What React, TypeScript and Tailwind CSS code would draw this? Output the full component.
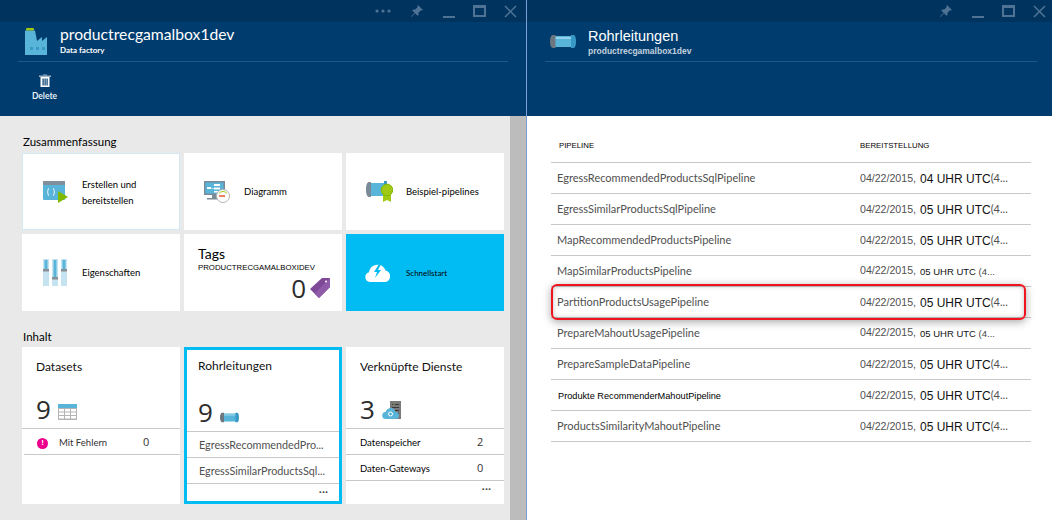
import type { ReactNode } from 'react';

const sans = 'font-["Lato","Liberation_Sans",sans-serif]';
const digit = 'font-["Open_Sans","Liberation_Sans",sans-serif]';
const arial = 'font-["Liberation_Sans",Arial,sans-serif]';

function WindowControls({ more }: { more?: boolean }) {
  return (
    <div className="flex h-[22px] items-center justify-end bg-[#00345f] pr-[9px]">
      {more && (
        <svg width="16" height="4" viewBox="0 0 16 4" className="mr-[19px]" fill="#4f7394">
          <circle cx="2" cy="2" r="1.6" />
          <circle cx="8" cy="2" r="1.6" />
          <circle cx="14" cy="2" r="1.6" />
        </svg>
      )}
      <svg width="14" height="14" viewBox="0 0 14 14" className="mr-[19px]" fill="#4f7394">
        <path d="M8 1l5 5-1.2.6-.8-.4-2.6 2.6.2 2-1 1L5 9.200 1.500 13 1 12.500 4.600 8.800 2.200 6.400l1-1 2 .2L7.800 3l-.4-.8z" />
      </svg>
      <div className="mr-[18px] mt-[11px] h-[2px] w-[12px] bg-[#4f7394]" />
      <div className="mr-[18px] h-[12px] w-[13px] border-2 border-t-[3px] border-[#4f7394]" />
      <svg width="13" height="13" viewBox="0 0 13 13" stroke="#4f7394" strokeWidth="1.500">
        <path d="M1 1l11 11M12 1L1 12" />
      </svg>
    </div>
  );
}

function FactoryIcon() {
  return (
    <svg width="24" height="28" viewBox="0 0 24 28">
      <path d="M1 2.500h10L13 13l5-4v4l5-4v18H1z" fill="#59b4d9" />
      <rect x="2" y="0" width="8" height="2.500" rx="1" fill="#a0c814" />
      <rect x="6" y="19" width="3" height="3" fill="#3999c6" />
      <rect x="12" y="19" width="3" height="3" fill="#3999c6" />
      <rect x="18" y="19" width="3" height="3" fill="#3999c6" />
    </svg>
  );
}

function TrashIcon() {
  return (
    <svg width="12" height="13" viewBox="0 0 12 13">
      <path d="M0 1.500h12v1.500H0z" fill="#9fb3c6" />
      <path d="M4 .5h4v1H4z" fill="#9fb3c6" />
      <path d="M1.500 3h9v10h-9z" fill="#fff" />
      <path d="M3.500 4.500h1.200v7H3.500zM5.500 4.500h1.200v7H5.500zM7.500 4.500h1.200v7H7.500z" fill="#003d6e" />
    </svg>
  );
}

function PipeIcon({ w, h }: { w: number; h: number }) {
  return (
    <svg width={w} height={h} viewBox="0 0 26 15">
      <rect x="2" y="2" width="22" height="11" fill="#59b4d9" />
      <rect x="4" y="3" width="18" height="2" fill="#8fd0ea" />
      <path d="M3 1h2.500v13H3c-1.500 0-3-2-3-6.500S1.500 1 3 1z" fill="#6b7680" />
      <path d="M21 1h2.500c1.500 0 2.500 2.500 2.500 6.500S25 14 23.500 14H21z" fill="#3999c6" />
    </svg>
  );
}

function DeployIcon() {
  return (
    <svg width="26" height="22" viewBox="0 0 26 22">
      <rect x="0" y="0" width="22" height="19" rx="1" fill="#59b4d9" />
      <rect x="0" y="0" width="22" height="4" fill="#7f8f9c" />
      <path d="M6 7.500c-1 0-1 .8-1 2s-.8 1.500-1 1.500c.2 0 1 .3 1 1.500s0 2 1 2M10 7.500c1 0 1 .8 1 2s.8 1.500 1 1.500c-.2 0-1 .3-1 1.500s0 2-1 2" fill="none" stroke="#fff" strokeWidth="1" />
      <path d="M15 10l10 6-10 6z" fill="#7fba00" />
    </svg>
  );
}

function DiagramIcon() {
  return (
    <svg width="26" height="22" viewBox="0 0 26 22">
      <rect x="0" y="0" width="21" height="14" fill="#7a8a96" />
      <rect x="1.500" y="1.500" width="18" height="11" fill="#59b4d9" />
      <path d="M3 6h4v2H3zM10 3h6v2h-6zM10 6.500h6v2h-6zM10 10h6v1.500h-6zM7 7h3v.5H7z" fill="#fff" />
      <rect x="8" y="14" width="5" height="3" fill="#7a8a96" />
      <rect x="3" y="17" width="15" height="1.500" fill="#7a8a96" />
      <circle cx="19" cy="15" r="6.500" fill="#fff" stroke="#b4b4b4" />
      <path d="M15 15h6" stroke="#e8562a" strokeWidth="1.500" />
      <path d="M15 12.500a5 5 0 0 1 8 0" fill="none" stroke="#a0c814" strokeWidth="1" />
    </svg>
  );
}

function SamplePipeIcon() {
  return (
    <svg width="27" height="21" viewBox="0 0 27 21">
      <rect x="3" y="2" width="18" height="13" fill="#59b4d9" />
      <path d="M3 1h2v15H3c-1.500 0-3-2-3-7.500S1.500 1 3 1z" fill="#7a8a96" />
      <path d="M18 0h3v4h-3z" fill="#3999c6" />
      <path d="M17 14h8v7l-4-2-4 2z" fill="#a0c814" />
      <circle cx="21" cy="9" r="5.800" fill="#a0c814" stroke="#7fba00" />
    </svg>
  );
}

function SlidersIcon() {
  return (
    <svg width="24" height="28" viewBox="0 0 24 28">
      {[0, 9, 18].map((x) => (
        <g key={x}>
          <rect x={x} y="0" width="6" height="27" fill="#c5e3f1" />
          <rect x={x + 1.5} y="1" width="3" height={x === 9 ? 19 : 10} fill="#59b4d9" />
        </g>
      ))}
      <rect x="0" y="10" width="6" height="2.500" fill="#8a8f94" />
      <rect x="9" y="18" width="6" height="2.500" fill="#8a8f94" />
      <rect x="18" y="10" width="6" height="2.500" fill="#8a8f94" />
    </svg>
  );
}

function TagIcon() {
  return (
    <svg width="20" height="20" viewBox="0 0 20 20">
      <path d="M12 0h8v9L9 20 0 11z" fill="#804998" />
      <path d="M20 0v9L9 20l-4.500-4.500z" fill="#8f5aa8" />
      <circle cx="16" cy="3.500" r="1" fill="#fff" />
    </svg>
  );
}

function CloudIcon() {
  return (
    <svg width="28" height="18" viewBox="0 0 28 18" className="-ml-[3px]">
      <path d="M6 18a5 5 0 0 1-1-9.800C6 3.500 9 1 13 1l-1 0c4-1 8 1 9.500 5.500A6 6 0 0 1 22 18z" fill="#fff" />
      <path d="M15 0l-5 8h3l-2 6 6-8h-3l3-6z" fill="#00bcf2" />
    </svg>
  );
}

function TableIcon() {
  return (
    <svg width="19" height="16" viewBox="0 0 19 16">
      <rect width="19" height="16" fill="#b4b4b4" />
      <rect width="19" height="4" fill="#59b4d9" />
      {[0, 1, 2].map((row) =>
        [0, 1, 2].map((col) => (
          <rect key={`${row}-${col}`} x={1 + col * 6} y={5 + row * 3.5} width="5" height="2.500" fill="#fff" />
        )),
      )}
    </svg>
  );
}

function ServerCloudIcon() {
  return (
    <svg width="20" height="19" viewBox="0 0 20 19">
      <rect x="8" y="0" width="11" height="18" fill="#7a7a7a" />
      <path d="M10 3h7v1h-7zM10 6h7v1h-7zM10 9h7v1h-7zM10 12h7v1h-7z" fill="#3a3a3a" />
      <path d="M11 3.500h2v.5h-2z" fill="#a0c814" />
      <path d="M4 18a3.500 3.500 0 0 1-.5-7C4.500 8.500 6.500 7 9 7s4 2 4.500 4a3.500 3.500 0 0 1 0 7z" fill="#59b4d9" />
      <circle cx="8.500" cy="13" r="2" fill="none" stroke="#fff" strokeWidth="1" />
    </svg>
  );
}

function LinkTile({ icon, children, dim }: { icon: ReactNode; children: ReactNode; dim?: string }) {
  return (
    <div className={`flex h-[77px] items-center ${dim ?? 'bg-white'}`}>
      <div className="flex w-[60px] shrink-0 justify-center pl-[6px]">{icon}</div>
      <div className={`${sans} pt-[2px] text-[9.500px] text-black`}>{children}</div>
    </div>
  );
}

function StatRow({ label, value, badge }: { label: string; value: string; badge?: boolean }) {
  return (
    <div className={`flex h-[26px] items-center border-b border-[#c8c8c8] pt-[3px] ${badge ? 'pl-[13px] pr-[10px]' : 'pl-[14px]'}`}>
      {badge && (
        <span className={`${arial} mr-[11px] flex h-[11px] w-[11px] items-center justify-center rounded-full bg-[#ec008c] text-[8px] font-bold text-white`}>
          !
        </span>
      )}
      <span className={`${sans} flex-1 text-[9.500px] ${badge ? 'text-[#333]' : 'text-black'}`}>{label}</span>
      <span className={`${digit} w-[27px] -translate-y-[1px] text-[11px] text-[#333]`}>{value}</span>
    </div>
  );
}

function CountTile({
  title,
  count,
  icon,
  children,
  className,
}: {
  title: string;
  count: string;
  icon: ReactNode;
  children: ReactNode;
  className?: string;
}) {
  return (
    <div className={`h-[157px] bg-white ${className ?? ''}`}>
      <div className={`${sans} h-[36px] pl-[14px] pt-[11px] text-[12px] leading-[18px] text-[#111]`}>{title}</div>
      <div className="flex h-[45px] items-end pb-[3px] pl-[14px]">
        <span className={`${digit} text-[26px] leading-[32px] text-[#2c2c2c]`}>{count}</span>
        <span className="mb-[5px] ml-[7px]">{icon}</span>
      </div>
      <div className="border-t border-[#c8c8c8]">{children}</div>
    </div>
  );
}

const rows = [
  { name: 'EgressRecommendedProductsSqlPipeline', hour: '04 UHR UTC' },
  { name: 'EgressSimilarProductsSqlPipeline', hour: '05 UHR UTC' },
  { name: 'MapRecommendedProductsPipeline', hour: '05 UHR UTC' },
  { name: 'MapSimilarProductsPipeline', hour: '05 UHR UTC', small: true },
  { name: 'PartitionProductsUsagePipeline', hour: '05 UHR UTC', marked: true },
  { name: 'PrepareMahoutUsagePipeline', hour: '05 UHR UTC', small: true },
  { name: 'PrepareSampleDataPipeline', hour: '05 UHR UTC' },
  { name: 'Produkte RecommenderMahoutPipeline', hour: '05 UHR UTC', bold: true },
  { name: 'ProductsSimilarityMahoutPipeline', hour: '05 UHR UTC' },
];

export default function App() {
  return (
    <div className="flex h-[520px] w-[1052px] overflow-hidden bg-white">
      <div className="flex w-[526px] shrink-0 flex-col">
        <div className="h-[116px] bg-[#003d6e]">
          <WindowControls more />
          <div className="mx-[18px] flex h-[40px] border-b border-[#1d5886] pl-[6px] pt-[6px]">
            <FactoryIcon />
            <div className="ml-[12px] -mt-[4px]">
              <div className={`${sans} text-[15.700px] leading-[20px] text-white`}>productrecgamalbox1dev</div>
              <div className={`${sans} text-[8px] font-bold leading-[12px] text-white`}>Data factory</div>
            </div>
          </div>
          <div className="ml-[32px] flex w-[25px] flex-col items-center pt-[12px]">
            <TrashIcon />
            <div className={`${sans} mt-[3px] text-[8.500px] font-bold leading-[12px] text-[#e6eef5]`}>Delete</div>
          </div>
        </div>
        <div className="flex flex-1 bg-[#e9e9e9]">
          <div className="flex-1 pl-[22px] pt-[18px]">
            <div className={`${sans} ml-[1px] h-[19px] text-[11.500px] leading-[16px] text-black`}>Zusammenfassung</div>
            <div className="grid grid-cols-[158px_158px_158px] gap-[4px]">
              <LinkTile dim="bg-white border-[1.500px] border-[#d3e9f6]" icon={<DeployIcon />}>
                <div className="-ml-[1px] leading-[16px]">
                  Erstellen und
                  <br />
                  bereitstellen
                </div>
              </LinkTile>
              <LinkTile icon={<DiagramIcon />}>Diagramm</LinkTile>
              <LinkTile icon={<SamplePipeIcon />}>Beispiel-pipelines</LinkTile>
              <LinkTile icon={<SlidersIcon />}>Eigenschaften</LinkTile>
              <div className="flex h-[77px] flex-col bg-white pl-[14px] pt-[12px]">
                <div className={`${sans} text-[14px] leading-[16px] text-black`}>Tags</div>
                <div className={`${arial} text-[7.800px] leading-[11px] text-black`}>PRODUCTRECGAMALBOXIDEV</div>
                <div className="flex items-center justify-end pr-[12px]">
                  <span className={`${digit} mr-[4px] text-[26px] leading-[30px] text-[#2c2c2c]`}>0</span>
                  <TagIcon />
                </div>
              </div>
              <LinkTile dim="bg-[#00bcf2]" icon={<CloudIcon />}>
                <span className="text-[8px]">Schnellstart</span>
              </LinkTile>
            </div>
            <div className={`${sans} ml-[1px] mt-[18px] h-[18px] text-[11.500px] leading-[16px] text-black`}>Inhalt</div>
            <div className="grid grid-cols-[158px_158px_158px] gap-[4px]">
              <CountTile title="Datasets" count="9" icon={<TableIcon />}>
                <div className="ml-[2px]">
                  <StatRow label="Mit Fehlern" value="0" badge />
                </div>
              </CountTile>
              <CountTile
                title="Rohrleitungen"
                count="9"
                icon={<PipeIcon w={19} h={11} />}
                className="border-[3px] border-[#00bcf2] [&>div:first-child]:h-[33px] [&>div:first-child]:pl-[11px] [&>div:first-child]:pt-[7px] [&>div:nth-child(2)]:h-[48px] [&>div:nth-child(2)]:pl-[11px]"
              >
                {['EgressRecommendedPro...', 'EgressSimilarProductsSql...'].map((text) => (
                  <div key={text} className={`${sans} flex h-[26px] items-center border-b border-[#c8c8c8] pl-[12px] pt-[2px] text-[10.800px] text-[#505050]`}>
                    <span className="whitespace-nowrap">{text}</span>
                  </div>
                ))}
                <div className={`${arial} pr-[11px] text-right text-[11px] font-bold leading-[10px] text-[#444]`}>...</div>
              </CountTile>
              <CountTile title="Verknüpfte Dienste" count="3" icon={<ServerCloudIcon />}>
                <StatRow label="Datenspeicher" value="2" />
                <StatRow label="Daten-Gateways" value="0" />
                <div className={`${arial} pr-[13px] text-right text-[11px] font-bold leading-[10px] text-[#444]`}>...</div>
              </CountTile>
            </div>
          </div>
          <div className="w-[16px] shrink-0 bg-[#bcbcbc]" />
        </div>
      </div>

      <div className="w-[1px] shrink-0 bg-[#7d9fd8]" />

      <div className="flex flex-1 flex-col">
        <div className="h-[116px] bg-[#003d6e]">
          <WindowControls />
          <div className="mx-[18px] flex h-[40px] border-b border-[#1d5886] pl-[5px] pt-[12px]">
            <PipeIcon w={26} h={15} />
            <div className="ml-[12px] -mt-[8px]">
              <div className={`${arial} text-[14.500px] leading-[20px] text-white`}>Rohrleitungen</div>
              <div className={`${arial} text-[8.500px] font-bold leading-[10px] text-[#c4d2df]`}>productrecgamalbox1dev</div>
            </div>
          </div>
        </div>
        <div className="px-[24px] pt-[24px]">
          <div className="flex h-[23px] w-[480px] border-b border-[#c8c8c8] pl-[8px] pt-[1px]">
            <span className={`${arial} w-[301px] text-[7.800px] leading-[10px] text-black`}>PIPELINE</span>
            <span className={`${arial} text-[7.800px] leading-[10px] text-black`}>BEREITSTELLUNG</span>
          </div>
          {rows.map((row) => (
            <div key={row.name} className="relative flex h-[31px] w-[480px] items-center border-b border-[#c8c8c8] pl-[6px]">
              <span
                className={
                  row.bold
                    ? `${arial} w-[303px] pl-[1px] pt-[3px] text-[9.200px] text-black`
                    : `${sans} w-[303px] text-[11px] text-[#505050]`
                }
              >
                {row.name}
              </span>
              <span className="flex items-baseline whitespace-nowrap">
                <span className={`${arial} w-[60px] text-[10.600px] text-[#505050]`}>04/22/2015,</span>
                {row.small ? (
                  <span className={`${arial} translate-y-[1px] text-[9.500px] text-[#111]`}>
                    {row.hour} <span className="text-[#444]">(4...</span>
                  </span>
                ) : (
                  <>
                    <span className={`${arial} translate-y-[1px] text-[12px] text-[#111]`}>{row.hour}</span>
                    <span className={`${sans} text-[11px] text-[#505050]`}>(4...</span>
                  </>
                )}
              </span>
              {row.marked && (
                <div className="absolute left-0 -top-[3px] h-[36px] w-[475px] rounded-[6px] border-2 border-[#f0141e] shadow-[0_2px_8px_rgba(0,0,0,0.35),inset_0_0_5px_rgba(0,0,0,0.25)]" />
              )}
            </div>
          ))}
        </div>
      </div>
    </div>
  );
}
